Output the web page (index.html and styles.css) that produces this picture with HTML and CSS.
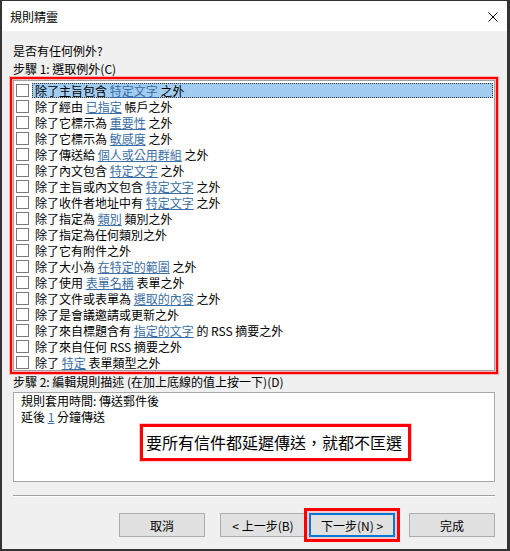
FILE: index.html
```html
<!DOCTYPE html>
<html lang="zh-Hant">
<head>
  <meta charset="UTF-8">
  <title>規則精靈</title>
  <link rel="stylesheet" href="styles.css">
</head>
<body>
  <div class="window">
    <div class="titlebar">
      <span class="title">規則精靈</span>
      <svg class="close" width="10" height="10" viewBox="0 0 10 10">
        <path d="M0.5 0.5 L9.5 9.5 M9.5 0.5 L0.5 9.5" stroke="#000" stroke-width="1" fill="none"/>
      </svg>
    </div>

    <div class="content">
      <div class="label first">是否有任何例外?</div>
      <div class="label">步驟 1: 選取例外(C)</div>

      <div class="mark-box">
        <ul class="list">
          <li class="selected"><span class="check"></span><span class="item">除了主旨包含 <span class="link">特定文字</span> 之外</span></li>
          <li><span class="check"></span><span class="item">除了經由 <span class="link">已指定</span> 帳戶之外</span></li>
          <li><span class="check"></span><span class="item">除了它標示為 <span class="link">重要性</span> 之外</span></li>
          <li><span class="check"></span><span class="item">除了它標示為 <span class="link">敏感度</span> 之外</span></li>
          <li><span class="check"></span><span class="item">除了傳送給 <span class="link">個人或公用群組</span> 之外</span></li>
          <li><span class="check"></span><span class="item">除了內文包含 <span class="link">特定文字</span> 之外</span></li>
          <li><span class="check"></span><span class="item">除了主旨或內文包含 <span class="link">特定文字</span> 之外</span></li>
          <li><span class="check"></span><span class="item">除了收件者地址中有 <span class="link">特定文字</span> 之外</span></li>
          <li><span class="check"></span><span class="item">除了指定為 <span class="link">類別</span> 類別之外</span></li>
          <li><span class="check"></span><span class="item">除了指定為任何類別之外</span></li>
          <li><span class="check"></span><span class="item">除了它有附件之外</span></li>
          <li><span class="check"></span><span class="item">除了大小為 <span class="link">在特定的範圍</span> 之外</span></li>
          <li><span class="check"></span><span class="item">除了使用 <span class="link">表單名稱</span> 表單之外</span></li>
          <li><span class="check"></span><span class="item">除了文件或表單為 <span class="link">選取的內容</span> 之外</span></li>
          <li><span class="check"></span><span class="item">除了是會議邀請或更新之外</span></li>
          <li><span class="check"></span><span class="item">除了來自標題含有 <span class="link">指定的文字</span> 的 RSS 摘要之外</span></li>
          <li><span class="check"></span><span class="item">除了來自任何 RSS 摘要之外</span></li>
          <li><span class="check"></span><span class="item">除了 <span class="link">特定</span> 表單類型之外</span></li>
        </ul>
      </div>

      <div class="label step2">步驟 2: 編輯規則描述 (在加上底線的值上按一下)(D)</div>
      <div class="desc">
        <div class="desc-line">規則套用時間: 傳送郵件後</div>
        <div class="desc-line">延後 <span class="link">1</span> 分鐘傳送</div>
        <div class="note">要所有信件都延遲傳送，就都不匡選</div>
      </div>

      <div class="separator"></div>

      <div class="buttons">
        <button class="btn">取消</button>
        <button class="btn back">&lt; 上一步(B)</button>
        <button class="btn next">下一步(N) &gt;</button>
        <button class="btn finish">完成</button>
      </div>
    </div>
  </div>
</body>
</html>
```

FILE: styles.css
```css
html, body { margin: 0; padding: 0; }
body { font-family: "Noto Sans CJK TC", "Noto Sans", sans-serif; font-size: 12px; color: #000; background: #fff; }

.window {
  width: 510px; height: 551px; box-sizing: border-box;
  border: 1px solid #333; border-left-width: 2px; border-right-width: 3px; border-bottom-width: 2px;
  background: #f0f0f0;
  overflow: hidden;
}

.titlebar { height: 30px; background: #fff; display: flex; align-items: center; justify-content: space-between; padding: 0 8px 0 8px; }
.title { font-size: 12px; line-height: 16px; margin-top: 1px; }
.close { margin-right: 1px; margin-top: 1px; }

.content { padding: 12px 12px 0 11px; }
.label { line-height: 16px; height: 16px; white-space: nowrap; }
.label.first { margin-bottom: 2px; }
.label.step2 { margin-bottom: 2px; }

.mark-box {
  margin: 0 -3px; border: 2px solid #f00; padding: 1px;
  box-shadow: 0 0 0 1px rgba(255, 0, 0, 0.25), inset 0 0 0 1px rgba(255, 0, 0, 0.25);
}
.list { list-style: none; margin: 0; padding: 1px 0; height: 291px; box-sizing: border-box; border: 1px solid #a0a0a0; background: #fff; }
.list li { display: flex; align-items: center; height: 16px; }
.check { width: 11px; height: 11px; border: 1px solid #7a7a7a; background: #fff; margin-left: 2px; flex: none; }
.item { flex: 1; display: block; margin: 0 1px 0 3px; padding-left: 2px; line-height: 13px; height: 15px; white-space: nowrap; border: 1px solid transparent; box-sizing: border-box; }
.selected .item { background: #a2cdf1; border: 1px dotted #333; }
.link { color: #3a6ea5; text-decoration: underline; text-underline-offset: 1px; }

.desc { height: 90px; box-sizing: border-box; border: 1px solid #a8a8a8; background: #fff; padding: 0 0 0 7px; }
.desc-line { line-height: 16px; height: 16px; white-space: nowrap; }
.note {
  display: inline-block; margin: -1px 0 0 119px;
  border: 3px solid #f00; padding: 3px 6px 3px 3px;
  font-size: 16px; line-height: 25px; height: 25px; white-space: nowrap;
  box-shadow: 0 0 0 1px rgba(255, 0, 0, 0.2);
}

.separator { margin-top: 13px; border-top: 1px solid #a0a0a0; border-bottom: 1px solid #fff; }

.buttons { display: flex; justify-content: flex-end; margin-top: 16px; }
.btn {
  width: 86px; height: 24px; box-sizing: border-box;
  background: #e1e1e1; border: 1px solid #adadad; border-radius: 0;
  font-family: inherit; font-size: 12px; color: #000; padding: 0;
}
.btn.back { margin-left: 15px; }
.btn.next { margin-left: 3px; border: 2px solid #0078d7; outline: 3px solid #f00; outline-offset: 2px; box-shadow: 0 0 0 5px rgba(255,0,0,0.15); }
.btn.finish { margin-left: 14px; }
```
